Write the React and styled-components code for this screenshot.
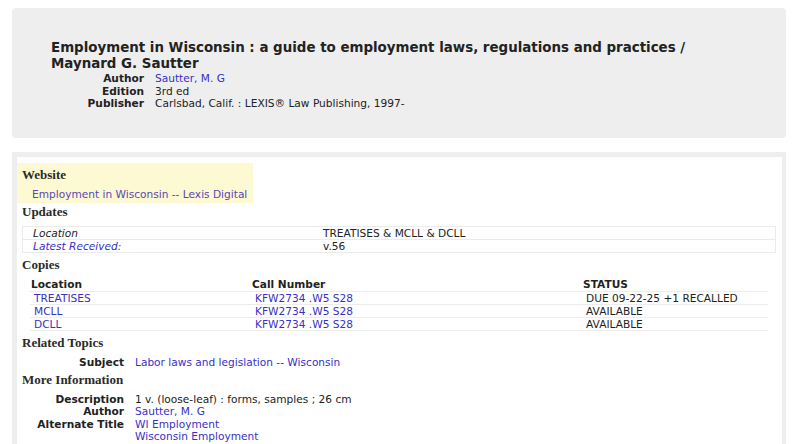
import React from 'react'
import styled, { createGlobalStyle } from 'styled-components'

const GlobalStyle = createGlobalStyle`
  body {
    margin: 0;
    background: #fff;
    font-family: "DejaVu Sans", Verdana, sans-serif;
    font-size: 10.6px;
    color: #222;
  }
`

const updates = [
  { label: 'Location', value: 'TREATISES & MCLL & DCLL' },
  { label: 'Latest Received:', value: 'v.56', link: true },
]

const copies = [
  { loc: 'TREATISES', call: 'KFW2734 .W5 S28', status: 'DUE 09-22-25 +1 RECALLED' },
  { loc: 'MCLL', call: 'KFW2734 .W5 S28', status: 'AVAILABLE' },
  { loc: 'DCLL', call: 'KFW2734 .W5 S28', status: 'AVAILABLE' },
]

function App() {
  return (
    <>
      <GlobalStyle />
      <Page>
        <Header>
          <Title>
            Employment in Wisconsin : a guide to employment laws, regulations and practices /
            <br />
            Maynard G. Sautter
          </Title>
          <Fields offset="93px">
            <Label>Author</Label>
            <Link>Sautter, M. G</Link>
            <Label>Edition</Label>
            <Value>3rd ed</Value>
            <Label>Publisher</Label>
            <Value>Carlsbad, Calif. : LEXIS® Law Publishing, 1997-</Value>
          </Fields>
        </Header>

        <Panel>
          <Inner>
            <Website>
              <Heading>Website</Heading>
              <WebLink>Employment in Wisconsin -- Lexis Digital</WebLink>
            </Website>

            <Section>
              <Heading>Updates</Heading>
              <UpdateTable>
                {updates.map((u) => (
                  <UpdateRow key={u.label}>
                    <UpdateLabel link={u.link}>{u.label}</UpdateLabel>
                    <Value>{u.value}</Value>
                  </UpdateRow>
                ))}
              </UpdateTable>

              <Heading>Copies</Heading>
              <CopyTable>
                <CopyHead>
                  <span>Location</span>
                  <span>Call Number</span>
                  <span>STATUS</span>
                </CopyHead>
                {copies.map((c) => (
                  <CopyRow key={c.loc}>
                    <Link>{c.loc}</Link>
                    <Link>{c.call}</Link>
                    <Value>{c.status}</Value>
                  </CopyRow>
                ))}
              </CopyTable>

              <Heading>Related Topics</Heading>
              <Fields offset="102px" pad="4px 0 2px">
                <Label>Subject</Label>
                <Link>Labor laws and legislation -- Wisconsin</Link>
              </Fields>

              <Heading>More Information</Heading>
              <Fields offset="102px" pad="4px 0 0">
                <Label>Description</Label>
                <Value>1 v. (loose-leaf) : forms, samples ; 26 cm</Value>
                <Label>Author</Label>
                <Link>Sautter, M. G</Link>
                <Label>Alternate Title</Label>
                <Link>WI Employment</Link>
                <Label />
                <Link>Wisconsin Employment</Link>
              </Fields>
            </Section>
          </Inner>
        </Panel>
      </Page>
    </>
  )
}

export default App

const Page = styled.div`
  padding: 8px 14px 0 12px;
  height: 444px;
  box-sizing: border-box;
  overflow: hidden;
`

const Header = styled.div`
  background: #eeeeee;
  border-radius: 4px;
  height: 130px;
  box-sizing: border-box;
  padding: 32px 0 0 39px;
`

const Title = styled.h1`
  margin: 0;
  font-size: 13.4px;
  line-height: 16px;
  font-weight: bold;
  color: #222;
`

const Fields = styled.div`
  display: grid;
  grid-template-columns: ${(p) => p.offset} 1fr;
  column-gap: 11px;
  row-gap: 0;
  line-height: 12.5px;
  padding: ${(p) => p.pad || '0'};
`

const Label = styled.div`
  font-weight: bold;
  text-align: right;
  color: #222;
`

const Value = styled.div`
  color: #222;
`

const Link = styled.a`
  color: #3a2fc6;
  text-decoration: none;
  cursor: pointer;
`

const Panel = styled.div`
  margin-top: 14px;
  background: #eeeeee;
  padding: 5px 4px 0 5px;
  height: 300px;
  box-sizing: border-box;
`

const Inner = styled.div`
  background: #fff;
  height: 100%;
  padding-top: 6px;
  box-sizing: border-box;
`

const Heading = styled.h3`
  margin: 0;
  font-family: "Liberation Serif", "Times New Roman", serif;
  font-size: 13px;
  font-weight: bold;
  color: #2b2b2b;
  line-height: 18px;
`

const Website = styled.div`
  width: 236px;
  height: 40px;
  box-sizing: border-box;
  background: #fdf9d2;
  padding: 3px 5px 0;
`

const WebLink = styled.a`
  display: block;
  color: #5a48b3;
  padding: 3px 0 0 10px;
  line-height: 14px;
  white-space: nowrap;
`

const Section = styled.div`
  padding: 0 5px;
`

const UpdateTable = styled.div`
  margin: 5px 1px 3px 0;
  border: 1px solid #ebebeb;
`

const UpdateRow = styled.div`
  display: grid;
  grid-template-columns: 290px 1fr;
  padding-left: 10px;
  line-height: 12px;
  & + & {
    border-top: 1px solid #ebebeb;
  }
`

const UpdateLabel = styled.div`
  font-style: italic;
  color: ${(p) => (p.link ? '#3a2fc6' : '#222')};
`

const CopyTable = styled.div`
  margin: 3px 9px 3px 8px;
`

const cols = `
  display: grid;
  grid-template-columns: 221px 331px 1fr;
  line-height: 12px;
  border-bottom: 1px solid #ececec;
`

const CopyHead = styled.div`
  ${cols}
  padding: 1px 0 1px 1px;
  font-weight: bold;
`

const CopyRow = styled.div`
  ${cols}
  padding-left: 4px;
`
